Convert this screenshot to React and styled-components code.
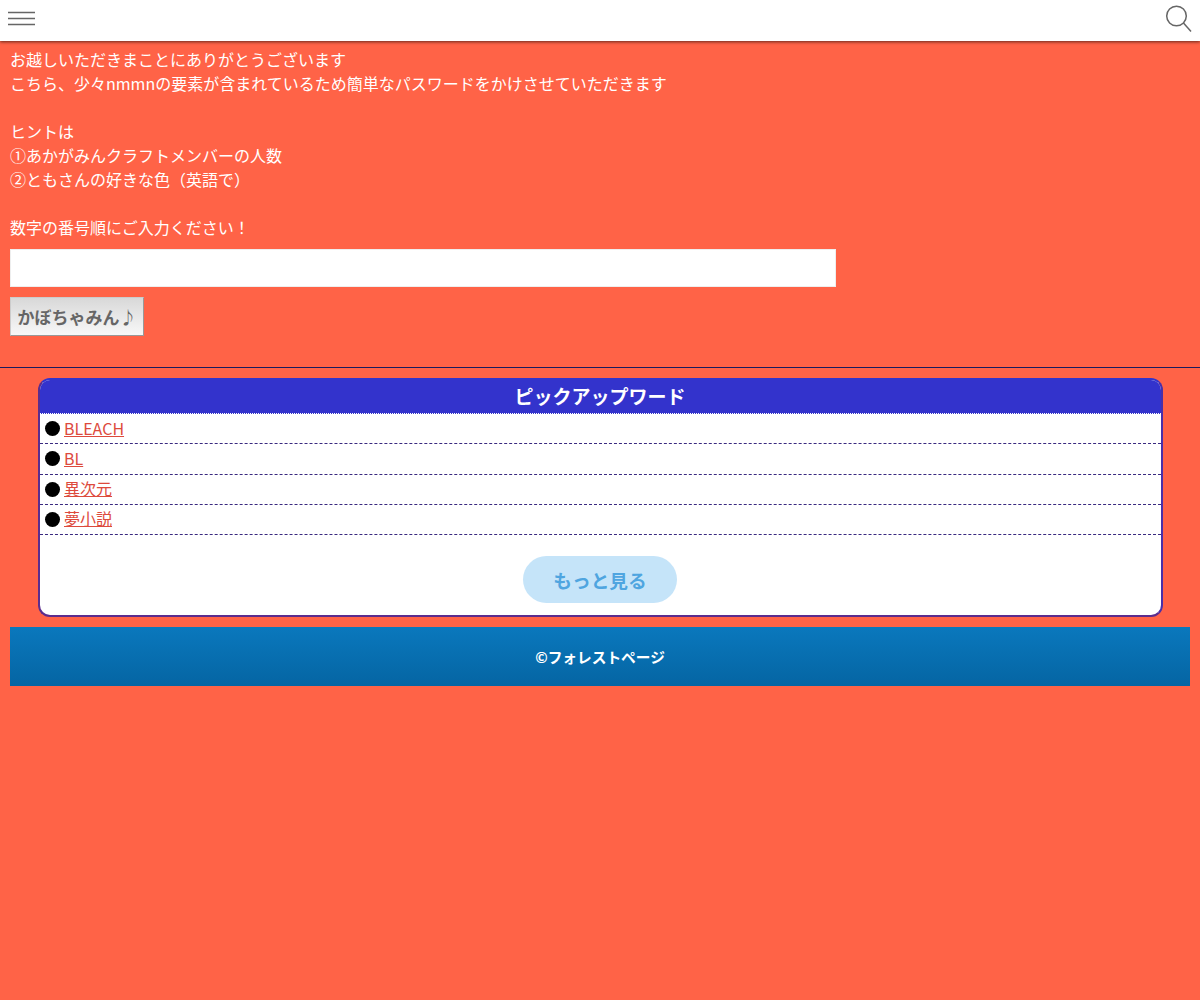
import React from 'react';
import styled, { createGlobalStyle } from 'styled-components';

const GlobalStyle = createGlobalStyle`
  html, body {
    margin: 0;
    padding: 0;
    background: #ff6347;
    color: #fff;
    font-family: "Noto Sans CJK JP", "Noto Sans", sans-serif;
    font-size: 16px;
    line-height: 24px;
  }
`;

const Header = styled.header`
  display: flex;
  align-items: center;
  justify-content: space-between;
  height: 41px;
  padding: 0 8px;
  background: #fff;
  box-shadow: 0 1px 3px rgba(0, 0, 0, 0.6);
`;

const IconButton = styled.div`
  display: flex;
  margin-top: ${(props) => props.$shift}px;
  color: #666;
`;

const Main = styled.main`
  padding: 6px 10px 0;
`;

const Message = styled.p`
  margin: 0;
  white-space: pre-line;
`;

const PasswordInput = styled.input`
  display: block;
  box-sizing: border-box;
  width: 826px;
  height: 38px;
  margin-top: 10px;
  border: 1px solid #eee;
  background: #fff;
`;

const SubmitButton = styled.button`
  display: block;
  box-sizing: border-box;
  width: 134px;
  height: 39px;
  margin-top: 10px;
  padding: 0;
  border: 1px solid #ccc;
  border-right-color: #999;
  border-bottom-color: #999;
  background: linear-gradient(#d8d8d8, #f8f8f8);
  color: #666;
  font-family: inherit;
  font-size: 17px;
  font-weight: 700;
  white-space: nowrap;
`;

const Divider = styled.hr`
  height: 1px;
  margin: 31px 0 10px;
  border: 0;
  background: #1a1a5e;
`;

const Panel = styled.section`
  box-sizing: border-box;
  width: 1125px;
  margin: 0 auto;
  border: 2px solid #3333cc;
  border-bottom-color: #5b2d8e;
  border-left-color: #5b2d8e;
  border-right-color: #4a2fa8;
  border-radius: 12px;
  background: #fff;
  overflow: hidden;
`;

const PanelTitle = styled.h2`
  margin: 0;
  height: 33px;
  border-bottom: 1px dotted #fff;
  background: #3333cc;
  font-size: 19px;
  font-weight: 700;
  line-height: 32px;
  text-align: center;
`;

const WordList = styled.ul`
  margin: 0;
  padding: 0;
  list-style: none;
`;

const WordRow = styled.li`
  display: flex;
  align-items: center;
  gap: 3px;
  height: 30.25px;
  box-sizing: border-box;
  padding: 0 5px 2px;
  border-bottom: 1px dashed #3a2a80;
  color: #000;
`;

const Bullet = styled.span`
  position: relative;
  top: 1px;
  width: 15px;
  height: 15px;
  margin-right: 1.5px;
  border-radius: 50%;
  background: #000;
`;

const WordLink = styled.a`
  color: #dd4a3c;
  text-decoration: underline;
`;

const MoreRow = styled.div`
  display: flex;
  justify-content: center;
  padding: 21px 0 12px;
`;

const MoreButton = styled.a`
  width: 154px;
  height: 47px;
  border-radius: 24px;
  background: #c5e4f9;
  color: #4fa5e0;
  font-size: 18.7px;
  font-weight: 700;
  line-height: 48px;
  text-align: center;
`;

const Footer = styled.footer`
  height: 59px;
  margin: 10px 10px 0;
  background: linear-gradient(#0a78bd, #0565a3);
  font-size: 14.7px;
  font-weight: 700;
  line-height: 60px;
  text-align: center;
`;

const words = ['BLEACH', 'BL', '異次元', '夢小説'];

const text = `お越しいただきまことにありがとうございます
こちら、少々nmmnの要素が含まれているため簡単なパスワードをかけさせていただきます

ヒントは
①あかがみんクラフトメンバーの人数
②ともさんの好きな色（英語で）

数字の番号順にご入力ください！`;

export default function App() {
  return (
    <>
      <GlobalStyle />
      <Header>
        <IconButton $shift={-5}>
          <svg width="28" height="16" viewBox="0 0 28 16" stroke="currentColor" strokeWidth="1.4">
            <path d="M0 2.5h27M0 8.5h27M0 14.5h27" />
          </svg>
        </IconButton>
        <IconButton $shift={-3}>
          <svg width="27" height="28" viewBox="0 0 27 28" fill="none" stroke="currentColor" strokeWidth="1.5">
            <circle cx="11.5" cy="11" r="9.8" />
            <path d="M18.5 18l7.5 8.5" />
          </svg>
        </IconButton>
      </Header>
      <Main>
        <Message>{text}</Message>
        <PasswordInput type="password" />
        <SubmitButton>かぼちゃみん♪</SubmitButton>
      </Main>
      <Divider />
      <Panel>
        <PanelTitle>ピックアップワード</PanelTitle>
        <WordList>
          {words.map((word) => (
            <WordRow key={word}>
              <Bullet />
              <WordLink href="#">{word}</WordLink>
            </WordRow>
          ))}
        </WordList>
        <MoreRow>
          <MoreButton>もっと見る</MoreButton>
        </MoreRow>
      </Panel>
      <Footer>©フォレストページ</Footer>
    </>
  );
}
